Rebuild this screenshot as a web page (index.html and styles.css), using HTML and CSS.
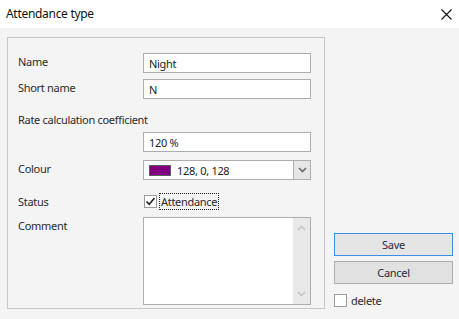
FILE: index.html
```html
<!DOCTYPE html>
<html lang="en">
<head>
    <meta charset="UTF-8">
    <title>Attendance type</title>
    <link rel="stylesheet" href="styles.css">
</head>
<body>
    <div class="window">
        <!-- Title bar -->
        <div class="titlebar">
            <span class="title">Attendance type</span>
            <svg class="close" width="11" height="11" viewBox="0 0 11 11">
                <path d="M0.5 0.5 L10.5 10.5 M10.5 0.5 L0.5 10.5" stroke="#111" stroke-width="1.1" fill="none"/>
            </svg>
        </div>

        <div class="content">
            <!-- Form panel -->
            <div class="panel">
                <div class="row first">
                    <label>Name</label>
                    <div class="field">Night</div>
                </div>
                <div class="row">
                    <label>Short name</label>
                    <div class="field">N</div>
                </div>
                <div class="wide-label">Rate calculation coefficient</div>
                <div class="row">
                    <span></span>
                    <div class="field">120 %</div>
                </div>
                <div class="row colour-row">
                    <label>Colour</label>
                    <div class="field combo">
                        <span class="swatch"></span>
                        <span class="combo-text">128, 0, 128</span>
                        <span class="combo-btn">
                            <svg width="9" height="6" viewBox="0 0 9 6">
                                <path d="M1 1 L4.5 4.5 L8 1" stroke="#6a6a6a" stroke-width="1.6" fill="none"/>
                            </svg>
                        </span>
                    </div>
                </div>
                <div class="row status-row">
                    <label>Status</label>
                    <div class="check-line">
                        <span class="checkbox">
                            <svg width="11" height="11" viewBox="0 0 11 11">
                                <path d="M1.5 5.5 L4.2 8.3 L9.5 2" stroke="#222" stroke-width="1.6" fill="none"/>
                            </svg>
                        </span>
                        <span class="focus-text">Attendance</span>
                    </div>
                </div>
                <div class="row comment-row">
                    <label>Comment</label>
                    <div class="memo">
                        <div class="memo-text"></div>
                        <div class="scrollbar">
                            <svg width="9" height="6" viewBox="0 0 9 6">
                                <path d="M1 5 L4.5 1.5 L8 5" stroke="#c2c2c2" stroke-width="1.4" fill="none"/>
                            </svg>
                            <svg width="9" height="6" viewBox="0 0 9 6">
                                <path d="M1 1 L4.5 4.5 L8 1" stroke="#c2c2c2" stroke-width="1.4" fill="none"/>
                            </svg>
                        </div>
                    </div>
                </div>
            </div>

            <!-- Buttons -->
            <div class="side">
                <div class="button save">Save</div>
                <div class="button">Cancel</div>
                <div class="delete-line">
                    <span class="checkbox empty"></span>
                    <span>delete</span>
                </div>
            </div>
        </div>
    </div>
</body>
</html>
```

FILE: styles.css
```css
body {
    margin: 0;
    padding: 0;
    font-family: "Noto Sans", "Open Sans", sans-serif;
    font-size: 11px;
    letter-spacing: -0.3px;
    color: #2a2a2a;
}

.window {
    width: 459px;
    height: 319px;
    background: #f4f4f4;
    overflow: hidden;
}

.titlebar {
    height: 28px;
    background: #fff;
    display: flex;
    align-items: center;
    justify-content: space-between;
    padding: 0 7px 0 6px;
}

.title {
    font-size: 12px;
    color: #111;
    margin-top: -1px;
}

.content {
    display: flex;
    padding: 9px 0 0 7px;
}

.panel {
    width: 306px;
    height: 255px;
    border: 1px solid #c6c6c6;
    padding: 15px 0 0 10px;
}

.row {
    display: grid;
    grid-template-columns: 125px 168px;
    margin-top: 6px;
}

.row.first {
    margin-top: 0;
}

.row label {
    padding-top: 1px;
}

.field {
    height: 20px;
    box-sizing: border-box;
    border: 1px solid #adadad;
    background: #fff;
    padding: 2px 0 0 5px;
    color: #222;
}

.wide-label {
    margin-top: 13px;
    height: 15px;
}

.row:nth-child(4) {
    margin-top: 5px;
}

.colour-row {
    margin-top: 8px;
}

.combo {
    display: flex;
    align-items: center;
    padding: 0 0 0 5px;
}

.swatch {
    width: 20px;
    height: 9px;
    background: #800080;
    border: 1px solid #5a5a5a;
    margin-right: 6px;
}

.combo-text {
    flex: 1;
}

.combo-btn {
    width: 16px;
    height: 18px;
    border-left: 1px solid #adadad;
    background: #e6e6e6;
    display: flex;
    align-items: center;
    justify-content: center;
}

.status-row {
    margin-top: 13px;
}

.check-line {
    display: flex;
    align-items: center;
    padding-left: 1px;
}

.checkbox {
    width: 13px;
    height: 13px;
    box-sizing: border-box;
    border: 1px solid #999;
    background: #fff;
    display: flex;
    align-items: center;
    justify-content: center;
}

.focus-text {
    margin-left: 2px;
    border: 1px dotted #222;
    padding: 0 1px;
    line-height: 15px;
}

.comment-row {
    margin-top: 7px;
}

.memo {
    height: 88px;
    box-sizing: border-box;
    border: 1px solid #adadad;
    background: #fff;
    display: flex;
}

.memo-text {
    flex: 1;
}

.scrollbar {
    width: 17px;
    background: #e9e9e9;
    display: flex;
    flex-direction: column;
    justify-content: space-between;
    align-items: center;
    padding: 7px 0 7px;
}

.side {
    width: 119px;
    margin-left: 9px;
    display: flex;
    flex-direction: column;
    padding-top: 196px;
}

.button {
    height: 23px;
    box-sizing: border-box;
    border: 1px solid #adadad;
    background: #e1e1e1;
    display: flex;
    align-items: center;
    justify-content: center;
    color: #2a2a3a;
    margin-bottom: 5px;
}

.button.save {
    border-color: #3d8ee6;
    background: #e5e5e5;
}

.delete-line {
    display: flex;
    align-items: center;
    margin-top: 4px;
}

.delete-line .checkbox {
    margin-right: 4px;
}
```
